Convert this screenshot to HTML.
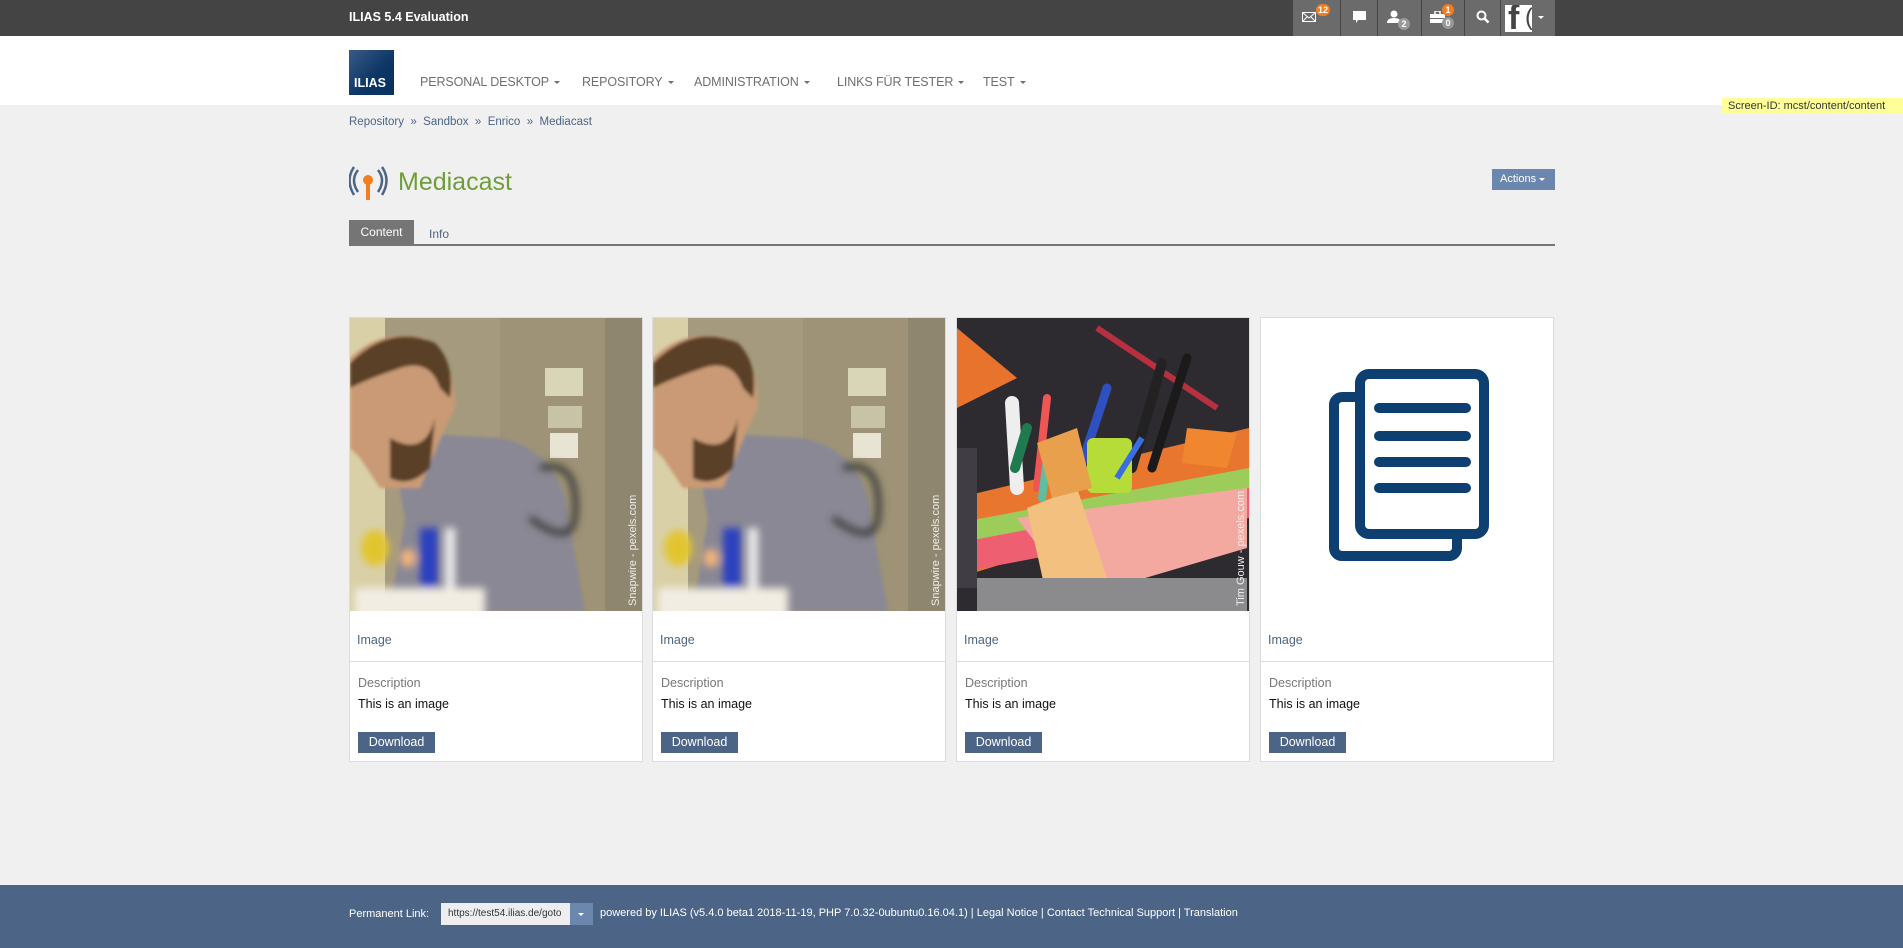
<!DOCTYPE html>
<html><head><meta charset="utf-8"><style>
*{margin:0;padding:0;box-sizing:border-box}
body{width:1903px;height:948px;background:#f0f0f0;font-family:"Liberation Sans",sans-serif;position:relative;overflow:hidden}
.a{position:absolute}
#top{left:0;top:0;width:1903px;height:36px;background:#444}
.ib{top:0;height:36px;background:#6b6b6b}
.badge{position:absolute;border-radius:8px;font-size:9px;font-weight:bold;color:#fff;text-align:center;line-height:12px;height:12px;min-width:12px;padding:0 2px}
#hdr{left:0;top:36px;width:1903px;height:69px;background:#fff}
.nav{top:75px;font-size:12.5px;color:#6f6f6f;letter-spacing:-0.1px}
.nav:after{content:"";display:inline-block;margin-left:5px;vertical-align:middle;border-left:3px solid transparent;border-right:3px solid transparent;border-top:3px solid #6f6f6f}
.card{top:317px;width:294px;height:445px;background:#fff;border:1px solid #dcdcdc}
.card .img{position:absolute;left:0;top:0;width:292px;height:293px;overflow:hidden}
.card .lbl{position:absolute;left:7px;top:315px;font-size:12.5px;color:#4c6586}
.card .hr{position:absolute;left:0;top:343px;width:292px;height:1px;background:#dcdcdc}
.card .d1{position:absolute;left:8px;top:358px;font-size:12.5px;color:#777}
.card .d2{position:absolute;left:8px;top:379px;font-size:12.5px;color:#111}
.card .dl{position:absolute;left:8px;top:414px;width:77px;height:21px;background:#4c6586;color:#fff;font-size:12.5px;line-height:21px;text-align:center}
.foot{left:0;top:885px;width:1903px;height:63px;background:#4c6586}
</style></head><body>
<div id="top" class="a"></div>
<div class="a" style="left:349px;top:10px;color:#fff;font-weight:bold;font-size:12.5px">ILIAS 5.4 Evaluation</div>
<div class="a ib" style="left:1293px;width:47px"></div>
<div class="a ib" style="left:1341px;width:36px"></div>
<div class="a ib" style="left:1378px;width:43px"></div>
<div class="a ib" style="left:1422px;width:42px"></div>
<div class="a ib" style="left:1465px;width:35px"></div>
<div class="a ib" style="left:1501px;width:54px"></div>
<svg class="a" style="left:1302px;top:12px" width="14" height="10"><rect x="0.5" y="0.5" width="13" height="9" fill="none" stroke="#fff"/><path d="M0.5 0.5L7 6L13.5 0.5M0.5 9.5L5 5M13.5 9.5L9 5" fill="none" stroke="#fff"/></svg>
<div class="badge" style="left:1316px;top:4px;background:#f47d20">12</div>
<svg class="a" style="left:1353px;top:11px" width="13" height="13"><path d="M0 0H13V9H5L3 12V9H0Z" fill="#fff"/></svg>
<svg class="a" style="left:1387px;top:10px" width="14" height="14"><circle cx="7" cy="4" r="3.5" fill="#fff"/><path d="M0 13Q0 8 7 8Q14 8 14 13Z" fill="#fff"/></svg>
<div class="badge" style="left:1398px;top:18px;background:#999">2</div>
<svg class="a" style="left:1430px;top:11px" width="15" height="12"><rect x="0" y="3" width="15" height="9" fill="#fff"/><rect x="5" y="0" width="5" height="4" fill="none" stroke="#fff" stroke-width="1.5"/><rect x="0" y="7" width="15" height="1" fill="#6b6b6b"/></svg>
<div class="badge" style="left:1442px;top:4px;background:#f47d20">1</div>
<div class="badge" style="left:1442px;top:17px;background:#999">0</div>
<svg class="a" style="left:1476px;top:10px" width="14" height="14"><circle cx="5.5" cy="5.5" r="4" fill="none" stroke="#fff" stroke-width="2"/><path d="M8.5 8.5L12.5 12.5" stroke="#fff" stroke-width="2.5"/></svg>
<div class="a" style="left:1505px;top:5px;width:27px;height:27px;background:#fff;overflow:hidden"><span style="position:absolute;left:3px;top:-6px;font-size:34px;font-weight:bold;color:#444;font-family:'Liberation Sans',sans-serif">f</span><span style="position:absolute;left:20px;top:-1px;font-size:24px;color:#444">(</span></div>
<div class="a" style="left:1538px;top:16px;border-left:3px solid transparent;border-right:3px solid transparent;border-top:3px solid #fff"></div>

<div id="hdr" class="a"></div>
<div class="a" style="left:349px;top:50px;width:45px;height:45px;background:linear-gradient(135deg,#3a5a85,#0b3564 60%,#0a3262)"><span style="position:absolute;left:5px;bottom:5px;color:#fff;font-weight:bold;font-size:12.5px">ILIAS</span></div>
<div class="a nav" style="left:420px">PERSONAL DESKTOP</div>
<div class="a nav" style="left:582px">REPOSITORY</div>
<div class="a nav" style="left:694px">ADMINISTRATION</div>
<div class="a nav" style="left:837px">LINKS FÜR TESTER</div>
<div class="a nav" style="left:983px">TEST</div>
<div class="a" style="left:1722px;top:98px;width:181px;height:16px;background:#ffff99;font-size:11px;line-height:16px;padding-left:6px;color:#333">Screen-ID: mcst/content/content</div>

<div class="a" style="left:349px;top:116px;font-size:11.5px;color:#4c6586">Repository &nbsp;»&nbsp; Sandbox &nbsp;»&nbsp; Enrico &nbsp;»&nbsp; Mediacast</div>

<svg class="a" style="left:349px;top:166px" width="40" height="38"><path d="M9 4Q1 14 9 26M5 1Q-4 14 5 29" fill="none" stroke="#4c6586" stroke-width="2.5"/><path d="M29 4Q37 14 29 26M33 1Q42 14 33 29" fill="none" stroke="#4c6586" stroke-width="2.5"/><circle cx="19" cy="14" r="5" fill="#f47d20"/><rect x="17" y="14" width="4" height="20" fill="#f47d20"/></svg>
<div class="a" style="left:398px;top:168px;font-size:25px;color:#6e9e3b">Mediacast</div>
<div class="a" style="left:1492px;top:169px;width:63px;height:21px;background:#6c87ad;color:#fff;font-size:11px;line-height:21px;padding-left:8px">Actions <span style="display:inline-block;vertical-align:middle;border-left:3px solid transparent;border-right:3px solid transparent;border-top:3px solid #fff"></span></div>
<div class="a" style="left:349px;top:220px;width:65px;height:24px;background:#757575;color:#fff;font-size:12px;line-height:25px;text-align:center">Content</div>
<div class="a" style="left:429px;top:227px;font-size:12px;color:#4c6586">Info</div>
<div class="a" style="left:349px;top:244px;width:1206px;height:2px;background:#757575"></div>

<!-- cards -->
<div class="a card" style="left:349px"><div class="img">
<svg width="292" height="293"><defs><filter id="b"><feGaussianBlur stdDeviation="4"/></filter><filter id="b2"><feGaussianBlur stdDeviation="1.5"/></filter></defs>
<rect width="292" height="293" fill="#a59a7e"/><rect x="0" width="35" height="293" fill="#d9d0a8"/><rect x="150" width="110" height="293" fill="#9e9376"/><rect x="255" width="37" height="293" fill="#8f8670"/>
<rect x="195" y="50" width="38" height="28" fill="#d8d6b6"/><rect x="198" y="88" width="34" height="22" fill="#c6c3a6"/><rect x="200" y="115" width="28" height="25" fill="#e8e4d4"/>
<g filter="url(#b2)"><path d="M60 115Q40 130 55 200L40 293H235L215 180Q200 130 150 120Z" fill="#8a8894"/><path d="M0 40Q30 10 75 20Q105 40 105 90L95 110L70 170L30 170L10 140L0 130Z" fill="#c99a74"/><path d="M0 45Q40 5 85 25Q105 45 100 80L90 70Q80 40 50 50Q20 60 0 70Z" fill="#5a4126"/><path d="M40 120Q75 140 85 100L80 150Q60 170 40 160Z" fill="#5a3f28"/></g>
<g filter="url(#b)"><rect x="5" y="270" width="130" height="30" fill="#f1ede2"/><ellipse cx="25" cy="230" rx="14" ry="18" fill="#e2c52d"/><rect x="70" y="210" width="18" height="60" fill="#2a3fc0"/><ellipse cx="58" cy="240" rx="8" ry="9" fill="#f0b47a"/><rect x="95" y="210" width="10" height="60" fill="#eeeeee"/><path d="M190 150Q230 140 225 200Q220 230 180 200" fill="none" stroke="#3a3a3a" stroke-width="6"/></g>
<text transform="translate(286,288) rotate(-90)" font-size="11" fill="#eee" font-family="Liberation Sans,sans-serif">Snapwire - pexels.com</text></svg>
</div><div class="lbl">Image</div><div class="hr"></div><div class="d1">Description</div><div class="d2">This is an image</div><div class="dl">Download</div></div>

<div class="a card" style="left:652px"><div class="img">
<svg width="292" height="293">
<rect width="292" height="293" fill="#a59a7e"/><rect x="0" width="35" height="293" fill="#d9d0a8"/><rect x="150" width="110" height="293" fill="#9e9376"/><rect x="255" width="37" height="293" fill="#8f8670"/>
<rect x="195" y="50" width="38" height="28" fill="#d8d6b6"/><rect x="198" y="88" width="34" height="22" fill="#c6c3a6"/><rect x="200" y="115" width="28" height="25" fill="#e8e4d4"/>
<g filter="url(#b2)"><path d="M60 115Q40 130 55 200L40 293H235L215 180Q200 130 150 120Z" fill="#8a8894"/><path d="M0 40Q30 10 75 20Q105 40 105 90L95 110L70 170L30 170L10 140L0 130Z" fill="#c99a74"/><path d="M0 45Q40 5 85 25Q105 45 100 80L90 70Q80 40 50 50Q20 60 0 70Z" fill="#5a4126"/><path d="M40 120Q75 140 85 100L80 150Q60 170 40 160Z" fill="#5a3f28"/></g>
<g filter="url(#b)"><rect x="5" y="270" width="130" height="30" fill="#f1ede2"/><ellipse cx="25" cy="230" rx="14" ry="18" fill="#e2c52d"/><rect x="70" y="210" width="18" height="60" fill="#2a3fc0"/><ellipse cx="58" cy="240" rx="8" ry="9" fill="#f0b47a"/><rect x="95" y="210" width="10" height="60" fill="#eeeeee"/><path d="M190 150Q230 140 225 200Q220 230 180 200" fill="none" stroke="#3a3a3a" stroke-width="6"/></g>
<text transform="translate(286,288) rotate(-90)" font-size="11" fill="#eee" font-family="Liberation Sans,sans-serif">Snapwire - pexels.com</text></svg>
</div><div class="lbl">Image</div><div class="hr"></div><div class="d1">Description</div><div class="d2">This is an image</div><div class="dl">Download</div></div>

<div class="a card" style="left:956px"><div class="img">
<svg width="292" height="293">
<rect width="292" height="293" fill="#2e2b30"/><path d="M0 10L60 60L0 90Z" fill="#e8732c"/><path d="M140 10L260 90" stroke="#b83040" stroke-width="6"/>
<path d="M0 180L292 110V170L0 260Z" fill="#e8762f"/><path d="M0 205L292 150V180L0 240Z" fill="#9ccc5a"/><path d="M0 225L292 170V200L0 255Z" fill="#ef5f72"/><path d="M60 200L290 170V230L120 280Z" fill="#f4a9a0"/><path d="M70 190L120 170L150 260L90 280Z" fill="#f4c080"/>
<rect x="20" y="260" width="270" height="33" fill="#8b8a8c"/><rect x="0" y="130" width="20" height="140" fill="#403d44"/>
<g stroke-linecap="round"><path d="M60 170L55 85" stroke="#eee" stroke-width="14"/><path d="M80 170L90 80" stroke="#e55" stroke-width="8"/><path d="M120 160L150 70" stroke="#2f50c0" stroke-width="9"/><path d="M175 150L205 45" stroke="#222" stroke-width="10"/><path d="M195 150L230 40" stroke="#1a1a1a" stroke-width="9"/><path d="M58 150L70 110" stroke="#1f7a50" stroke-width="10"/><path d="M85 180L92 125" stroke="#5bbfa0" stroke-width="8"/></g>
<rect x="130" y="120" width="45" height="55" rx="6" fill="#b6dc3a"/><path d="M80 125L120 110L135 170L95 180Z" fill="#e9a04c"/><path d="M230 110L280 115L270 150L225 145Z" fill="#f08630"/><path d="M160 160L185 120" stroke="#3a6ee0" stroke-width="6"/>
<text transform="translate(287,288) rotate(-90)" font-size="11" fill="#eee" font-family="Liberation Sans,sans-serif">Tim Gouw - pexels.com</text></svg>
</div><div class="lbl">Image</div><div class="hr"></div><div class="d1">Description</div><div class="d2">This is an image</div><div class="dl">Download</div></div>

<div class="a card" style="left:1260px"><div class="img">
<svg width="292" height="293">
<rect x="73" y="79" width="123" height="159" rx="8" fill="#fff" stroke="#0d3f70" stroke-width="10"/>
<rect x="99" y="56" width="124" height="160" rx="9" fill="#fff" stroke="#0d3f70" stroke-width="10"/>
<g stroke="#0d3f70" stroke-width="10" stroke-linecap="round"><path d="M118 90H205M118 118H205M118 144H205M118 170H205"/></g></svg>
</div><div class="lbl">Image</div><div class="hr"></div><div class="d1">Description</div><div class="d2">This is an image</div><div class="dl">Download</div></div>

<div class="a foot"></div>
<div class="a" style="left:349px;top:908px;font-size:11px;color:#fff">Permanent Link:</div>
<div class="a" style="left:441px;top:903px;width:129px;height:22px;background:#eee;font-size:10px;line-height:22px;padding-left:7px;color:#333;overflow:hidden;white-space:nowrap">https://test54.ilias.de/goto</div>
<div class="a" style="left:570px;top:903px;width:23px;height:22px;background:#6c87ad"><span style="position:absolute;left:8px;top:10px;border-left:3px solid transparent;border-right:3px solid transparent;border-top:3px solid #fff"></span></div>
<div class="a" style="left:600px;top:907px;font-size:11px;color:#fff;white-space:nowrap">powered by ILIAS (v5.4.0 beta1 2018-11-19, PHP 7.0.32-0ubuntu0.16.04.1) | Legal Notice | Contact Technical Support | Translation</div>
</body></html>
